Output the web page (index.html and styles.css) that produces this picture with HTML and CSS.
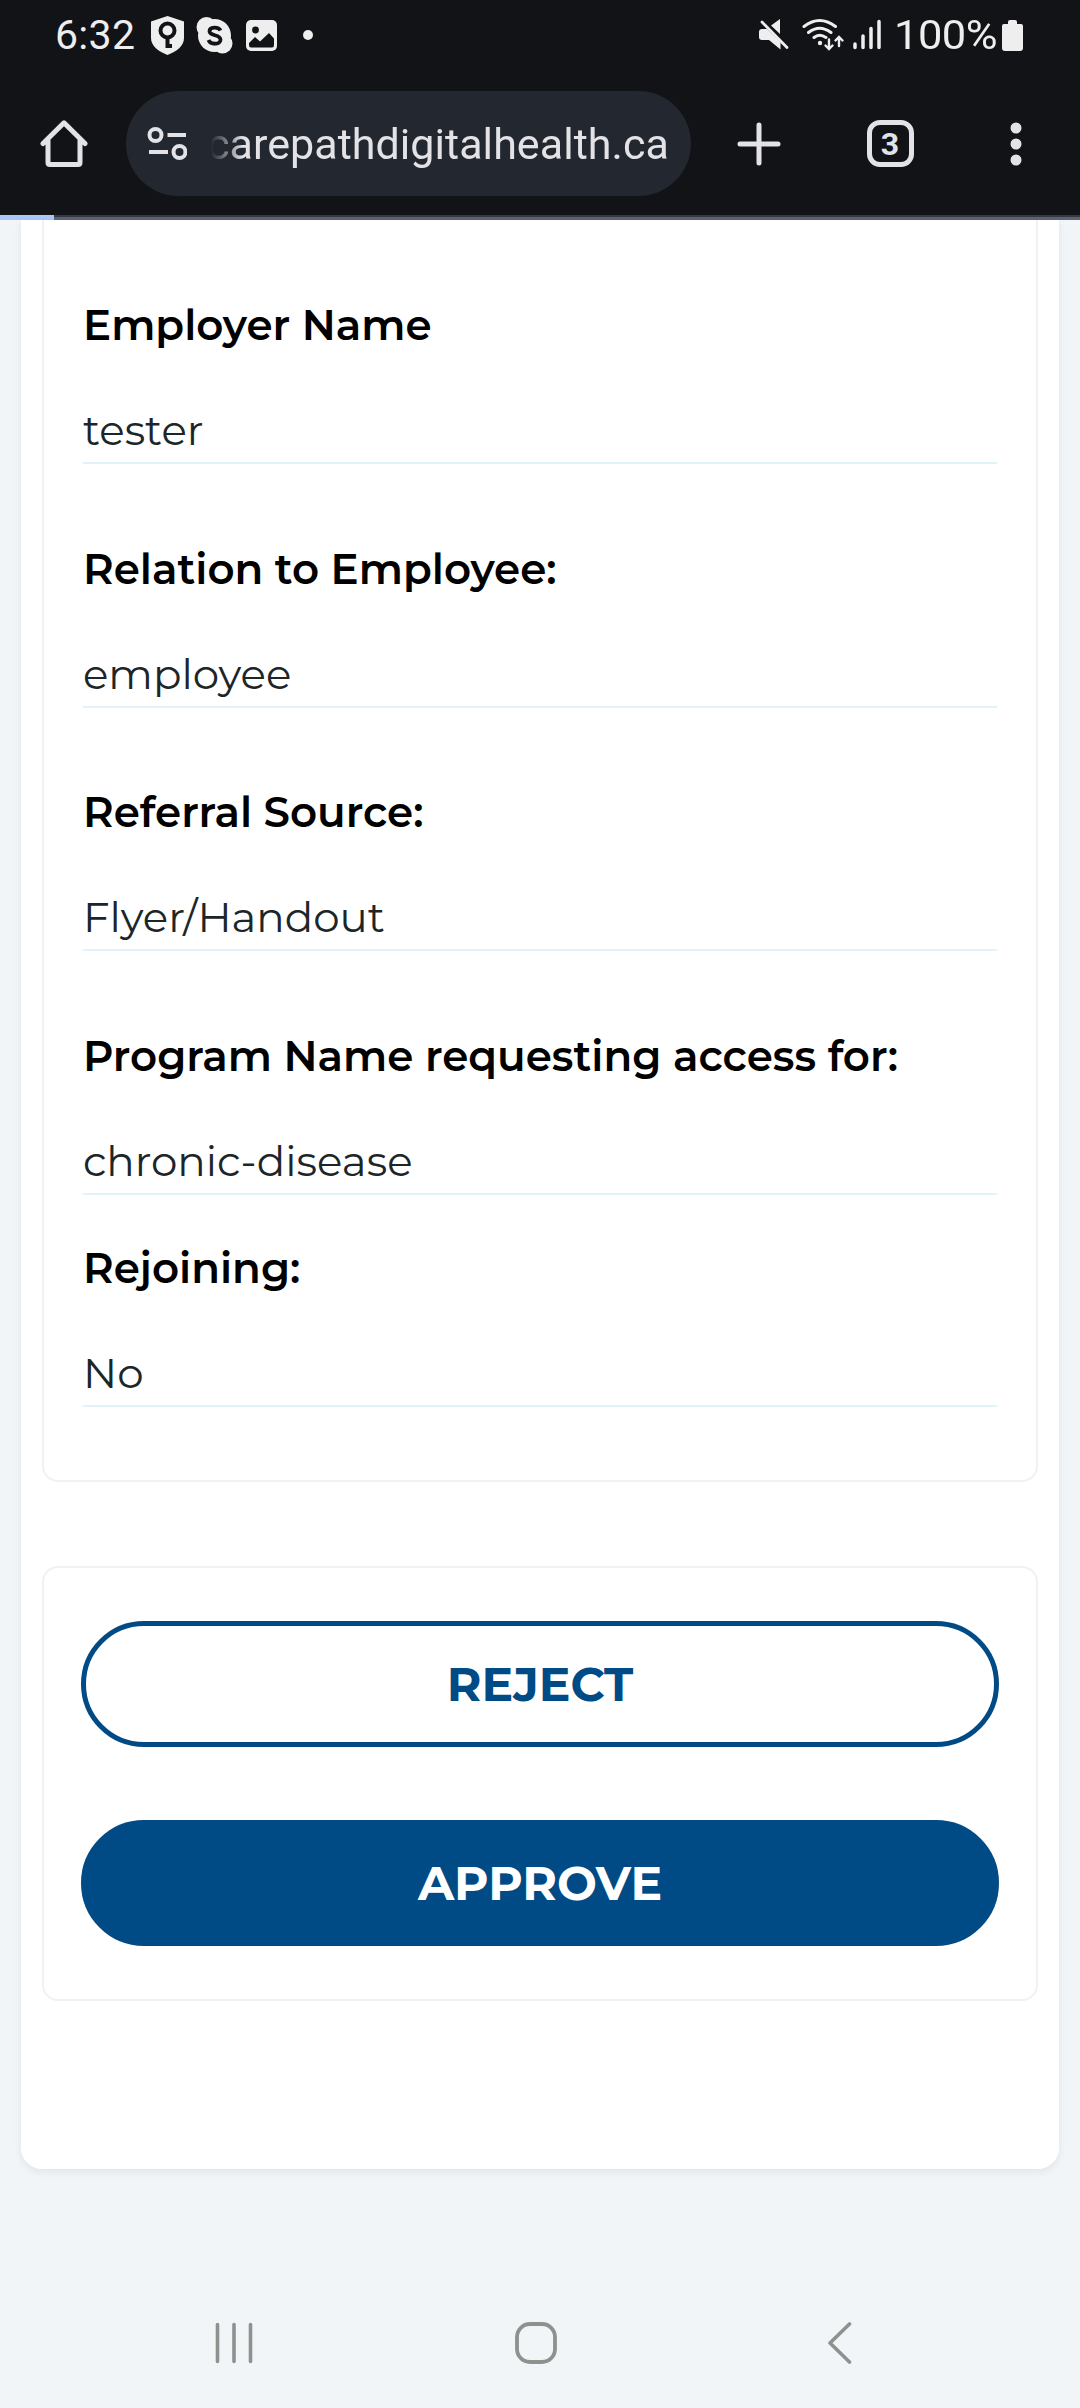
FILE: index.html
```html
<!DOCTYPE html>
<html lang="en">
<head>
<meta charset="utf-8">
<title>Access request</title>
<link rel="stylesheet" href="styles.css">
</head>
<body>
<header class="chrome">
  <div class="status">
    <span class="clock">6:32</span>
    <svg class="status-icons" width="164" height="40" viewBox="150 15 164 40">
      <path d="M167.500 16L184 21.500V38C184 46 176.500 51.500 167.500 55C158.500 51.500 151 46 151 38V21.500Z" fill="#eee"/>
      <circle cx="167.500" cy="30.500" r="7" fill="none" stroke="#121316" stroke-width="4"/>
      <path d="M167.500 37V48M167 46H172" stroke="#121316" stroke-width="4"/>
      <circle cx="214.500" cy="35.500" r="16.500" fill="#eee"/><circle cx="206.500" cy="27" r="10" fill="#eee"/><circle cx="222.500" cy="43.500" r="10" fill="#eee"/>
      <path d="M220.500 30.500C218.500 26.500 209.500 26.500 209.500 31.300C209.500 36.500 220.500 34 220.500 39.800C220.500 45 210.500 45 208.500 40" fill="none" stroke="#121316" stroke-width="3.800"/>
      <rect x="246" y="20" width="31" height="31" rx="5" fill="#eee"/>
      <circle cx="255.500" cy="30" r="3.400" fill="#121316"/>
      <path d="M249 43L255 37L260 41.500L269 33L274 38.500V45Q274 47.500 272 47.500H251Q249 47.500 249 45Z" fill="#121316"/>
      <circle cx="308" cy="35" r="5" fill="#eee"/>
    </svg>
    <svg class="signal" width="124" height="36" viewBox="758 17 124 36" fill="none" stroke="#eee" stroke-linecap="round">
      <path d="M780 19V34L771 25.500ZM762 29H767L780.500 42V49.500L769 40H762Q759 40 759 37V32Q759 29 762 29Z" fill="#eee" stroke="none"/>
      <path d="M762 22L787 47.500" stroke-width="2.800"/>
      <path d="M804 26.500Q819.500 14.500 835.500 26.500M808.500 32.500Q819.500 24 831 32.500M814 37.500Q819.500 33 826 37.500" stroke-width="3"/>
      <circle cx="820" cy="43" r="2.200" fill="#eee" stroke="none"/>
      <path d="M829 39.500V48.500M825.500 45.500L829 49L832.500 45.500M839 46V37.500M835.500 40.500L839 37L842.500 40.500" stroke-width="2.400"/>
      <path d="M855 44V47.500M863 36V47.500M871 28.500V47.500M879 21.500V47.500" stroke-width="3.500"/>
    </svg>
    <span class="percent">100%</span>
    <svg class="battery" width="21" height="31" viewBox="0 0 21 31"><path d="M6 4V2Q6 0 8 0H13Q15 0 15 2V4H19Q21 4 21 6V28Q21 31 18 31H3Q0 31 0 28V6Q0 4 2 4Z" fill="#eee"/></svg>
  </div>
  <div class="toolbar">
    <svg class="home" width="48" height="48" viewBox="39.500 120 48 48"><path d="M42.500 143.500L63.500 122.800L84.500 143.500M47.500 139V162.500Q47.500 164.500 49.500 164.500H77.500Q79.500 164.500 79.500 162.500V139" fill="none" stroke="#e3e2e7" stroke-width="5" stroke-linecap="round" stroke-linejoin="round"/></svg>
    <div class="address">
      <svg width="40" height="36" viewBox="147 126 40 36" fill="none" stroke="#e3e2e7" stroke-width="4"><circle cx="155.500" cy="135" r="6"/><circle cx="179.500" cy="152" r="6"/><path d="M167.500 135H186M149 152H168"/></svg>
      <span class="url">carepathdigitalhealth.ca</span>
    </div>
    <svg class="plus" width="44" height="44" viewBox="0 0 44 44"><path d="M22 3V41M3 22H41" stroke="#e3e2e7" stroke-width="5" stroke-linecap="round"/></svg>
    <span class="tabs">3</span>
    <svg class="more" width="12" height="44" viewBox="0 0 12 44" fill="#e3e2e7"><circle cx="6" cy="6" r="5.500"/><circle cx="6" cy="22" r="5.500"/><circle cx="6" cy="38" r="5.500"/></svg>
  </div>
  <div class="progress"><div class="progress-bar"></div></div>
</header>
<main class="page">
  <div class="panel">
    <section class="details">
      <div class="field"><div class="label">Employer Name</div><div class="value">tester</div></div>
      <div class="field"><div class="label">Relation to Employee:</div><div class="value">employee</div></div>
      <div class="field"><div class="label">Referral Source:</div><div class="value">Flyer/Handout</div></div>
      <div class="field"><div class="label">Program Name requesting access for:</div><div class="value">chronic-disease</div></div>
      <div class="field field-short"><div class="label">Rejoining:</div><div class="value">No</div></div>
    </section>
    <section class="actions">
      <button class="btn reject">REJECT</button>
      <button class="btn approve">APPROVE</button>
    </section>
  </div>
</main>
<nav class="nav">
  <svg width="38" height="42" viewBox="0 0 38 42"><path d="M2.500 2.500V39.500M19 2.500V39.500M35.500 2.500V39.500" stroke="#8f918f" stroke-width="3.600" stroke-linecap="round"/></svg>
  <svg width="42" height="42" viewBox="0 0 42 42"><rect x="2" y="2" width="38" height="38" rx="13" fill="none" stroke="#8f918f" stroke-width="3.800"/></svg>
  <svg width="25" height="42" viewBox="0 0 25 42"><path d="M22.500 2L3 21L22.500 40" fill="none" stroke="#8f918f" stroke-width="3.600" stroke-linecap="round" stroke-linejoin="round"/></svg>
</nav>
</body>
</html>
```

FILE: styles.css
```css
* { box-sizing: border-box; }
body {
  margin: 0;
  width: 1080px;
  height: 2408px;
  overflow: hidden;
  display: flex;
  flex-direction: column;
  background: #f1f5f7;
  font-family: Montserrat, Inter, "Open Sans", sans-serif;
}
svg { display: block; flex: none; }

.chrome { height: 220px; background: #121316; flex: none; }
.status { height: 70px; display: flex; align-items: center; padding-left: 55px; color: #eee; font: 41px/70px Roboto, sans-serif; }
.clock { width: 95px; letter-spacing: 0.3px; }
.signal { margin-left: 444px; }
.percent { width: 105px; margin-left: 12px; transform: scaleX(1.06); transform-origin: left; letter-spacing: -0.5px; }
.battery { margin-left: 3px; }
.toolbar { height: 145px; display: flex; align-items: center; padding: 2px 0 0 39.5px; }
.address {
  display: flex;
  align-items: center;
  width: 565px;
  height: 105px;
  margin-left: 38.5px;
  padding-left: 21px;
  border-radius: 53px;
  background: #232830;
}
.url {
  margin-left: 20px;
  font: 43px/60px Roboto, sans-serif;
  letter-spacing: 0.05px;
  color: #e3e2e7;
  white-space: nowrap;
  -webkit-mask-image: linear-gradient(to right, transparent 4px, #000 36px);
  mask-image: linear-gradient(to right, transparent 4px, #000 36px);
}
.plus { margin-left: 45.5px; }
.tabs {
  width: 47px;
  height: 47px;
  margin-left: 86px;
  border: 5px solid #e3e2e7;
  border-radius: 13px;
  color: #e3e2e7;
  font: 700 32px/38px Roboto, sans-serif;
  text-align: center;
}
.more { margin-left: 96.5px; }
.progress { height: 5px; background: #5d6275; border-top: 2px solid #343744; }
.progress-bar { width: 54px; height: 5px; margin-top: -2px; background: #abc5fb; }

.page { height: 2069px; padding: 0 21px; flex: none; }
.panel {
  height: 1949px;
  padding: 0 21px;
  background: #fff;
  border-radius: 0 0 21px 21px;
  box-shadow: 0 3px 8px rgba(0, 0, 0, 0.07);
}
.details {
  height: 1262px;
  padding: 0 39px;
  border: 2px solid #f1f1f2;
  border-top: 0;
  border-radius: 0 0 16px 16px;
}
.field {
  height: 243.75px;
  display: flex;
  flex-direction: column;
  justify-content: flex-end;
  border-bottom: 2px solid #e0f3fb;
}
.field-short { height: 212px; }
.label, .value { font-size: 42px; white-space: nowrap; }
.label { line-height: 50px; font-weight: 600; color: #000; margin-bottom: 48px; }
.value { line-height: 64px; font-weight: 400; color: #1c2628; }

.actions {
  height: 435px;
  margin-top: 84px;
  padding: 53px 37px 0;
  display: flex;
  flex-direction: column;
  gap: 73px;
  border: 2px solid #f1f1f2;
  border-radius: 16px;
}
.btn {
  height: 126px;
  padding: 0;
  border: 5px solid #004a85;
  border-radius: 63px;
  font-family: Montserrat, Inter, sans-serif;
  font-size: 47.25px;
  line-height: 114px;
  font-weight: 700;
}
.reject { background: #fff; color: #004a85; }
.approve { background: #004a85; color: #fff; }

.nav { display: flex; padding: 33px 0 0 215px; }
.nav svg:nth-child(2) { margin-left: 262px; }
.nav svg:nth-child(3) { margin-left: 270px; }
```
